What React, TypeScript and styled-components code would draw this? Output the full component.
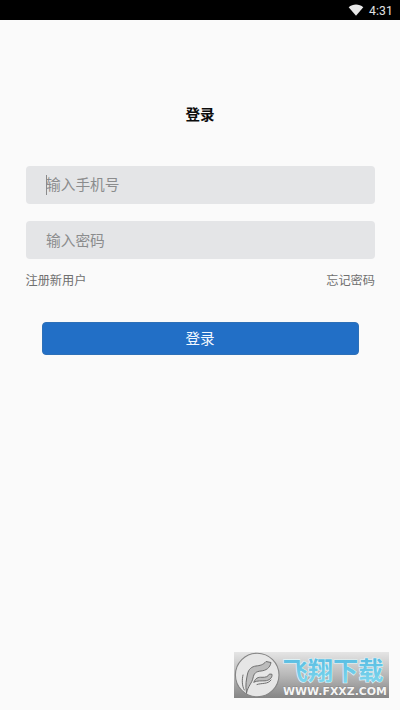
import React from 'react';
import styled, { createGlobalStyle } from 'styled-components';

const GlobalStyle = createGlobalStyle`
  * { box-sizing: border-box; }
  body {
    margin: 0;
    background: #fafafa;
    font-family: Roboto, "Noto Sans CJK SC", sans-serif;
  }
`;

const Screen = styled.main`
  position: relative;
  display: flex;
  flex-direction: column;
  height: 710px;
  overflow: hidden;
  background: #fafafa;
`;

const StatusBar = styled.header`
  display: flex;
  justify-content: flex-end;
  align-items: center;
  gap: 5px;
  height: 20px;
  padding: 2px 7px 0 0;
  background: #000;
  color: #e2e2e2;
  font-size: 12.2px;
  line-height: 18px;
  letter-spacing: 0.1px;
`;

const WifiSlot = styled.span`
  display: flex;
  margin-top: -3px;
`;

const Title = styled.h1`
  margin: 84px 0 0;
  height: 22px;
  font-size: 14.6px;
  line-height: 22px;
  font-weight: 700;
  text-align: center;
  color: #0c0c0c;
`;

const Form = styled.section`
  display: flex;
  flex-direction: column;
  gap: 17.5px;
  margin-top: 39.5px;
  padding: 0 25px 0 25.5px;
`;

const Field = styled.div`
  display: flex;
  align-items: center;
  height: 38px;
  padding: 1px 20px 0 20.5px;
  border-radius: 4px;
  background: #e4e5e7;
  color: #8b8c8d;
  font-size: 14.7px;
  line-height: 22px;
`;

const Caret = styled.span`
  width: 1px;
  height: 20px;
  margin: -1px -1px 0 0;
  background: #8a8b8c;
`;

const Links = styled.nav`
  display: flex;
  justify-content: space-between;
  margin-top: 13px;
  padding: 0 25px 0 25.5px;
  font-size: 12.2px;
  line-height: 18px;
  color: #707070;
`;

const SubmitButton = styled.button`
  height: 33.5px;
  margin: 31.5px 41.5px 0;
  padding: 2px 0 0;
  border: 1px solid #2d70b8;
  border-radius: 4px;
  background: #226fc6;
  color: #f2f8ff;
  font-family: inherit;
  font-size: 14.6px;
  line-height: 29px;
`;

const Watermark = styled.aside`
  position: absolute;
  left: 234px;
  top: 652px;
  display: flex;
  width: 155px;
  height: 46px;
  background: linear-gradient(#e5e5e5, #b8b8b8 50%, #858585);
`;

const WifiIcon = () => (
  <svg width="16" height="12" viewBox="0 0 16 12">
    <path d="M0.7 3.2C4.8-.5 11.2-.5 15.3 3.2L8 11.7Z" fill="#e8e8e8" />
  </svg>
);

const WatermarkArt = () => (
  <svg width="155" height="46" viewBox="0 0 155 46">
    <defs>
      <linearGradient id="sky" x1="0" y1="0" x2="0" y2="1">
        <stop offset="0" stopColor="#4fb6df" />
        <stop offset="1" stopColor="#83daef" />
      </linearGradient>
    </defs>
    <circle cx="23.2" cy="23" r="21.8" fill="#e6e6e6" stroke="#858585" strokeWidth="1.1" />
    <g fill="#bcbcbc" stroke="#6f6f6f" strokeWidth="1" strokeLinecap="round" strokeLinejoin="round">
      <path d="M12.5 41C11 33 12.5 27 13.5 22C14.5 17 18 14.5 22 14C26 13.5 29 13 32 9.5L37 10.5C36 16 32 18.5 27 19C22 19.5 20 21 19 26C18 31 14 34 12.5 41Z" />
      <path d="M20 30C21.5 26 24 25 28 25.3C32 25.5 34 24.5 35.5 22L38 22.3C38.5 26 35 28.6 31 28.8C27 29 24 28.5 20 30Z" />
      <path d="M9 23C7.8 28 8 34 10.3 38M23 32.5C28 30.8 34 32.5 37 28" fill="none" />
    </g>
    <text
      x="48.5" y="27.6" textLength="101" lengthAdjust="spacingAndGlyphs"
      fontFamily="Noto Sans CJK SC, sans-serif" fontSize="24.5" fontWeight="700"
      fill="url(#sky)" stroke="#e0f6fb" strokeWidth="1.2" paintOrder="stroke"
    >飞翔下载</text>
    <text
      x="49" y="43.4" textLength="104" lengthAdjust="spacingAndGlyphs"
      fontFamily="DejaVu Sans, sans-serif" fontSize="10.8" fontWeight="700"
      fill="#f5f5f5" stroke="#777" strokeWidth="0.6" paintOrder="stroke"
    >WWW.FXXZ.COM</text>
  </svg>
);

export default function App() {
  return (
    <>
      <GlobalStyle />
      <Screen>
        <StatusBar><WifiSlot><WifiIcon /></WifiSlot><span>4:31</span></StatusBar>
        <Title>登录</Title>
        <Form>
          <Field><Caret />输入手机号</Field>
          <Field>输入密码</Field>
        </Form>
        <Links><span>注册新用户</span><span>忘记密码</span></Links>
        <SubmitButton>登录</SubmitButton>
        <Watermark><WatermarkArt /></Watermark>
      </Screen>
    </>
  );
}
